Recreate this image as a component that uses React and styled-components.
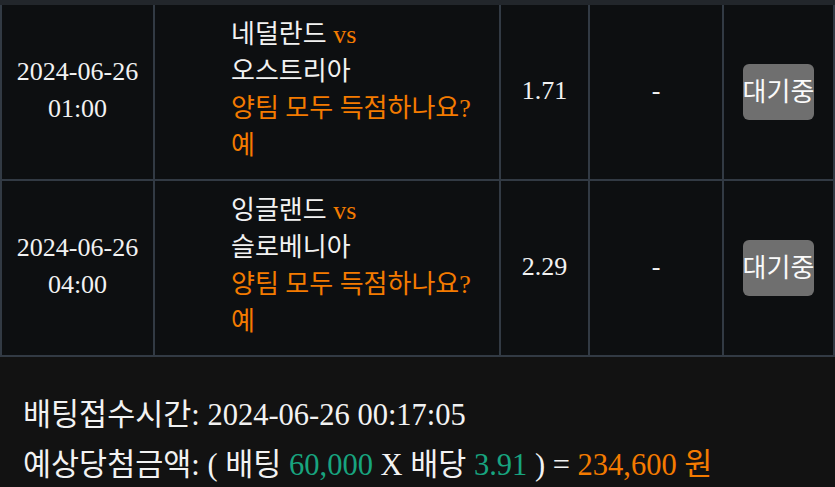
import React from "react";
import styled, { createGlobalStyle } from "styled-components";

const Global = createGlobalStyle`
  html, body { margin: 0; padding: 0; background: #121212; }
  body { width: 835px; height: 487px; overflow: hidden; }
`;

const Page = styled.div`
  width: 835px;
  height: 487px;
  background: #121212;
  font-family: "Liberation Serif", "Noto Sans CJK KR", serif;
  color: #f2f2f2;
`;

const Table = styled.div`
  display: grid;
  grid-template-columns: 151px 344px 87px 132px 109px;
  grid-auto-rows: 174px;
  gap: 2px;
  padding: 0 2px 2px 2px;
  border-top: 5px solid #22262b;
  background: #323a44;
  width: 835px;
  box-sizing: border-box;
`;

const Cell = styled.div`
  background: #0d0f11;
  display: flex;
  flex-direction: column;
  justify-content: center;
  align-items: ${(p) => (p.$left ? "flex-start" : "center")};
  padding-left: ${(p) => (p.$left ? "76px" : "0")};
  padding-bottom: ${(p) => p.$lift || 0}px;
  text-align: ${(p) => (p.$left ? "left" : "center")};
  font-size: 26px;
  line-height: 37px;
`;

const Orange = styled.span`
  color: #f47b00;
`;

const Green = styled.span`
  color: #18a47f;
`;

const Line = styled.div`
  white-space: nowrap;
`;

const WaitButton = styled.div`
  background: #6f6f6f;
  color: #fafafa;
  border-radius: 6px;
  height: 56px;
  display: flex;
  align-items: center;
  justify-content: center;
  padding: 0;
  font-size: 26px;
`;

const Summary = styled.div`
  padding: 33px 0 0 23px;
  font-size: 30.5px;
  line-height: 50px;
`;

const rows = [
  { date: "2024-06-26", time: "01:00", home: "네덜란드", away: "오스트리아", odds: "1.71" },
  { date: "2024-06-26", time: "04:00", home: "잉글랜드", away: "슬로베니아", odds: "2.29" },
];

export default function App() {
  return (
    <Page>
      <Global />
      <Table>
        {rows.map((r) => (
          <React.Fragment key={r.time}>
            <Cell $lift={4}>
              <Line>{r.date}</Line>
              <Line>{r.time}</Line>
            </Cell>
            <Cell $left $lift={5}>
              <Line>
                {r.home} <Orange>vs</Orange>
              </Line>
              <Line>{r.away}</Line>
              <Line>
                <Orange>양팀 모두 득점하나요?</Orange>
              </Line>
              <Line>
                <Orange>예</Orange>
              </Line>
            </Cell>
            <Cell $lift={4}>{r.odds}</Cell>
            <Cell $lift={4}>-</Cell>
            <Cell>
              <WaitButton>대기중</WaitButton>
            </Cell>
          </React.Fragment>
        ))}
      </Table>
      <Summary>
        <Line>배팅접수시간: 2024-06-26 00:17:05</Line>
        <Line>
          예상당첨금액: ( 배팅 <Green>60,000</Green> X 배당 <Green>3.91</Green> ) ={" "}
          <Orange>234,600 원</Orange>
        </Line>
      </Summary>
    </Page>
  );
}
